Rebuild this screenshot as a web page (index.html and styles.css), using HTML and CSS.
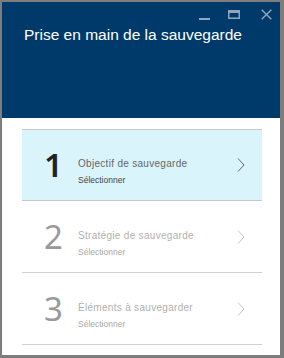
FILE: index.html
```html
<!DOCTYPE html>
<html lang="fr">
<head>
    <meta charset="UTF-8">
    <title>Prise en main de la sauvegarde</title>
    <link rel="stylesheet" href="styles.css">
</head>
<body>
    <div class="window">
        <div class="header">
            <div class="controls">
                <svg class="ctl min" width="11" height="12" viewBox="0 0 11 12"><rect x="0" y="9" width="11" height="2" fill="#8fa6bf"/></svg>
                <svg class="ctl max" width="12" height="12" viewBox="0 0 12 12"><rect x="0.75" y="1.75" width="10.5" height="7.5" fill="none" stroke="#8fa6bf" stroke-width="1.5"/><rect x="0" y="1" width="12" height="3" fill="#8fa6bf"/></svg>
                <svg class="ctl" width="11" height="12" viewBox="0 0 11 12"><path d="M0.7 0.7 L10.3 10.3 M10.3 0.7 L0.7 10.3" stroke="#8fa6bf" stroke-width="1.4"/></svg>
            </div>
            <h1 class="title">Prise en main de la sauvegarde</h1>
        </div>
        <div class="content">
            <div class="step active">
                <div class="num">1</div>
                <div class="text">
                    <div class="name">Objectif de sauvegarde</div>
                    <div class="sub">Sélectionner</div>
                </div>
                <svg class="chev" width="10" height="16" viewBox="0 0 10 16"><polyline points="2,1.5 8,8 2,14.5" fill="none" stroke="#666" stroke-width="1"/></svg>
            </div>
            <div class="step">
                <div class="num">2</div>
                <div class="text">
                    <div class="name">Stratégie de sauvegarde</div>
                    <div class="sub">Sélectionner</div>
                </div>
                <svg class="chev" width="10" height="16" viewBox="0 0 10 16"><polyline points="2,1.5 8,8 2,14.5" fill="none" stroke="#c4c4c4" stroke-width="1"/></svg>
            </div>
            <div class="step">
                <div class="num">3</div>
                <div class="text">
                    <div class="name">Éléments à sauvegarder</div>
                    <div class="sub">Sélectionner</div>
                </div>
                <svg class="chev" width="10" height="16" viewBox="0 0 10 16"><polyline points="2,1.5 8,8 2,14.5" fill="none" stroke="#c4c4c4" stroke-width="1"/></svg>
            </div>
        </div>
    </div>
</body>
</html>
```

FILE: styles.css
```css
body {
    margin: 0;
    font-family: "Liberation Sans", Arial, sans-serif;
}

.window {
    width: 278px;
    height: 353px;
    border-style: solid;
    border-color: #7d7d7d;
    border-width: 2px 4px 3px 2px;
    background: #fff;
    overflow: hidden;
}

.header {
    height: 116px;
    background: #003a6a;
}

.controls {
    display: flex;
    justify-content: flex-end;
    padding: 7px 8px 0 0;
    height: 12px;
}

.ctl.min {
    margin-right: 18px;
}

.ctl.max {
    margin-right: 21px;
}

.title {
    margin: 5px 0 0 22px;
    font-size: 15.5px;
    font-weight: normal;
    color: #fff;
}

.content {
    padding: 11px 18px 0 20px;
}

.step {
    display: flex;
    align-items: center;
    height: 71px;
    border-bottom: 1px solid #d0d0d0;
    color: #b0b0b0;
}

.step.active {
    height: 70px;
    border-top: 1px solid #c8c8c8;
    border-bottom-color: #c8c8c8;
    background: #d9f4fb;
    color: #666;
}

.num {
    width: 56px;
    padding-left: 22px;
    box-sizing: border-box;
    font-family: "Noto Sans", sans-serif;
    font-size: 33px;
    line-height: 34px;
    color: #999;
}

.active .num {
    color: #222;
    font-weight: 600;
}

.text {
    flex: 1;
    padding-top: 13px;
}

.name {
    font-size: 10px;
    letter-spacing: 0.3px;
}

.sub {
    margin-top: 6px;
    font-size: 8.5px;
    color: #a8a8a8;
}

.active .sub {
    color: #444;
}

.chev {
    margin-right: 16px;
}
```
